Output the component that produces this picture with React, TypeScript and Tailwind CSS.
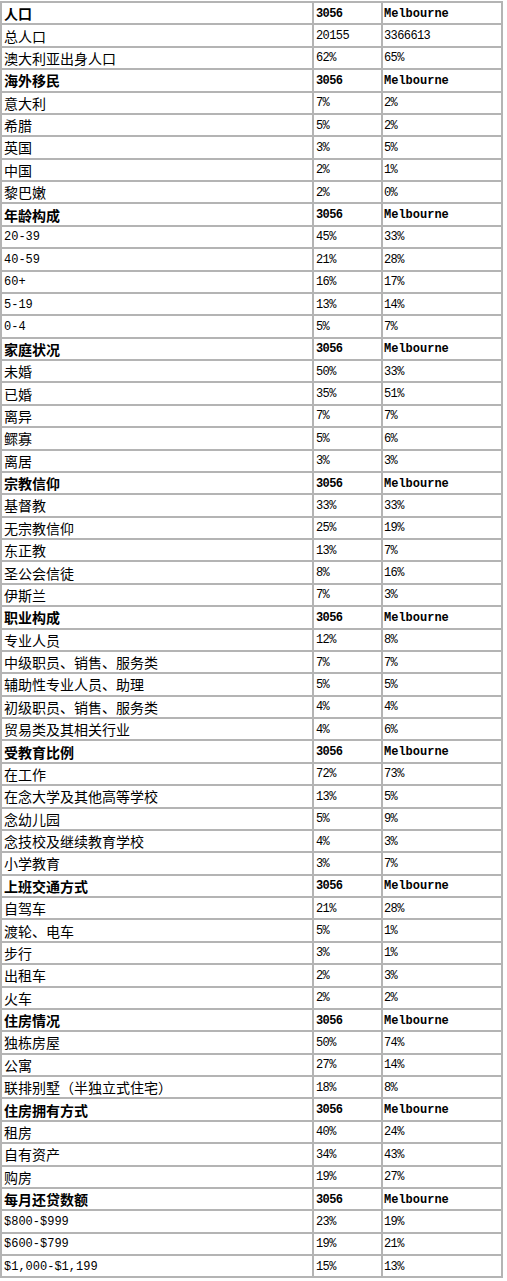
import React from 'react';

type Row = [string, string, string];

interface Section {
  title: string;
  rows: Row[];
}

const sections: Section[] = [
  {
    title: '人口',
    rows: [
      ['总人口', '20155', '3366613'],
      ['澳大利亚出身人口', '62%', '65%'],
    ],
  },
  {
    title: '海外移民',
    rows: [
      ['意大利', '7%', '2%'],
      ['希腊', '5%', '2%'],
      ['英国', '3%', '5%'],
      ['中国', '2%', '1%'],
      ['黎巴嫩', '2%', '0%'],
    ],
  },
  {
    title: '年龄构成',
    rows: [
      ['20-39', '45%', '33%'],
      ['40-59', '21%', '28%'],
      ['60+', '16%', '17%'],
      ['5-19', '13%', '14%'],
      ['0-4', '5%', '7%'],
    ],
  },
  {
    title: '家庭状况',
    rows: [
      ['未婚', '50%', '33%'],
      ['已婚', '35%', '51%'],
      ['离异', '7%', '7%'],
      ['鳏寡', '5%', '6%'],
      ['离居', '3%', '3%'],
    ],
  },
  {
    title: '宗教信仰',
    rows: [
      ['基督教', '33%', '33%'],
      ['无宗教信仰', '25%', '19%'],
      ['东正教', '13%', '7%'],
      ['圣公会信徒', '8%', '16%'],
      ['伊斯兰', '7%', '3%'],
    ],
  },
  {
    title: '职业构成',
    rows: [
      ['专业人员', '12%', '8%'],
      ['中级职员、销售、服务类', '7%', '7%'],
      ['辅助性专业人员、助理', '5%', '5%'],
      ['初级职员、销售、服务类', '4%', '4%'],
      ['贸易类及其相关行业', '4%', '6%'],
    ],
  },
  {
    title: '受教育比例',
    rows: [
      ['在工作', '72%', '73%'],
      ['在念大学及其他高等学校', '13%', '5%'],
      ['念幼儿园', '5%', '9%'],
      ['念技校及继续教育学校', '4%', '3%'],
      ['小学教育', '3%', '7%'],
    ],
  },
  {
    title: '上班交通方式',
    rows: [
      ['自驾车', '21%', '28%'],
      ['渡轮、电车', '5%', '1%'],
      ['步行', '3%', '1%'],
      ['出租车', '2%', '3%'],
      ['火车', '2%', '2%'],
    ],
  },
  {
    title: '住房情况',
    rows: [
      ['独栋房屋', '50%', '74%'],
      ['公寓', '27%', '14%'],
      ['联排别墅（半独立式住宅）', '18%', '8%'],
    ],
  },
  {
    title: '住房拥有方式',
    rows: [
      ['租房', '40%', '24%'],
      ['自有资产', '34%', '43%'],
      ['购房', '19%', '27%'],
    ],
  },
  {
    title: '每月还贷数额',
    rows: [
      ['$800-$999', '23%', '19%'],
      ['$600-$799', '19%', '21%'],
      ['$1,000-$1,199', '15%', '13%'],
    ],
  },
];

const cjk = "font-['Noto_Sans_CJK_SC',sans-serif]";
const mono = "font-['Liberation_Mono','Noto_Sans_CJK_SC',monospace]";

function isLatin(s: string) {
  return /^[\x00-\x7f]+$/.test(s);
}

function TableRow({ cells, header }: { cells: Row; header?: boolean }) {
  const [label, a, b] = cells;
  const labelClass = isLatin(label)
    ? `${mono} text-[12px]`
    : `${cjk} text-[14px]`;
  const numClass = header
    ? `${mono} text-[12px] font-bold`
    : `${mono} text-[12px] tracking-[-0.6px]`;
  return (
    <div className="grid grid-cols-[312px_69px_120px] h-[22.38px]">
      <div
        className={`flex items-center pl-[2px] pt-px border-r-2 border-b-2 border-[#b4b4b4] overflow-hidden whitespace-nowrap ${labelClass} ${
          header ? 'font-bold' : 'font-normal'
        }`}
      >
        {label}
      </div>
      <div
        className={`flex items-center pl-[2px] pt-px border-r-2 border-b-2 border-[#b4b4b4] whitespace-nowrap ${numClass} ${
          header ? 'tracking-[-0.6px]' : ''
        }`}
      >
        {a}
      </div>
      <div
        className={`flex items-center pl-[1px] pt-px border-r-2 border-b-2 border-[#b4b4b4] whitespace-nowrap ${numClass}`}
      >
        {b}
      </div>
    </div>
  );
}

export default function App() {
  return (
    <div className="w-[507px] min-h-[1281px] bg-white text-black pt-px">
      <div className="w-[503px] border-l-2 border-t-2 border-[#b4b4b4]">
        {sections.map((section) => (
          <React.Fragment key={section.title}>
            <TableRow cells={[section.title, '3056', 'Melbourne']} header />
            {section.rows.map((row) => (
              <TableRow key={row[0]} cells={row} />
            ))}
          </React.Fragment>
        ))}
      </div>
    </div>
  );
}
